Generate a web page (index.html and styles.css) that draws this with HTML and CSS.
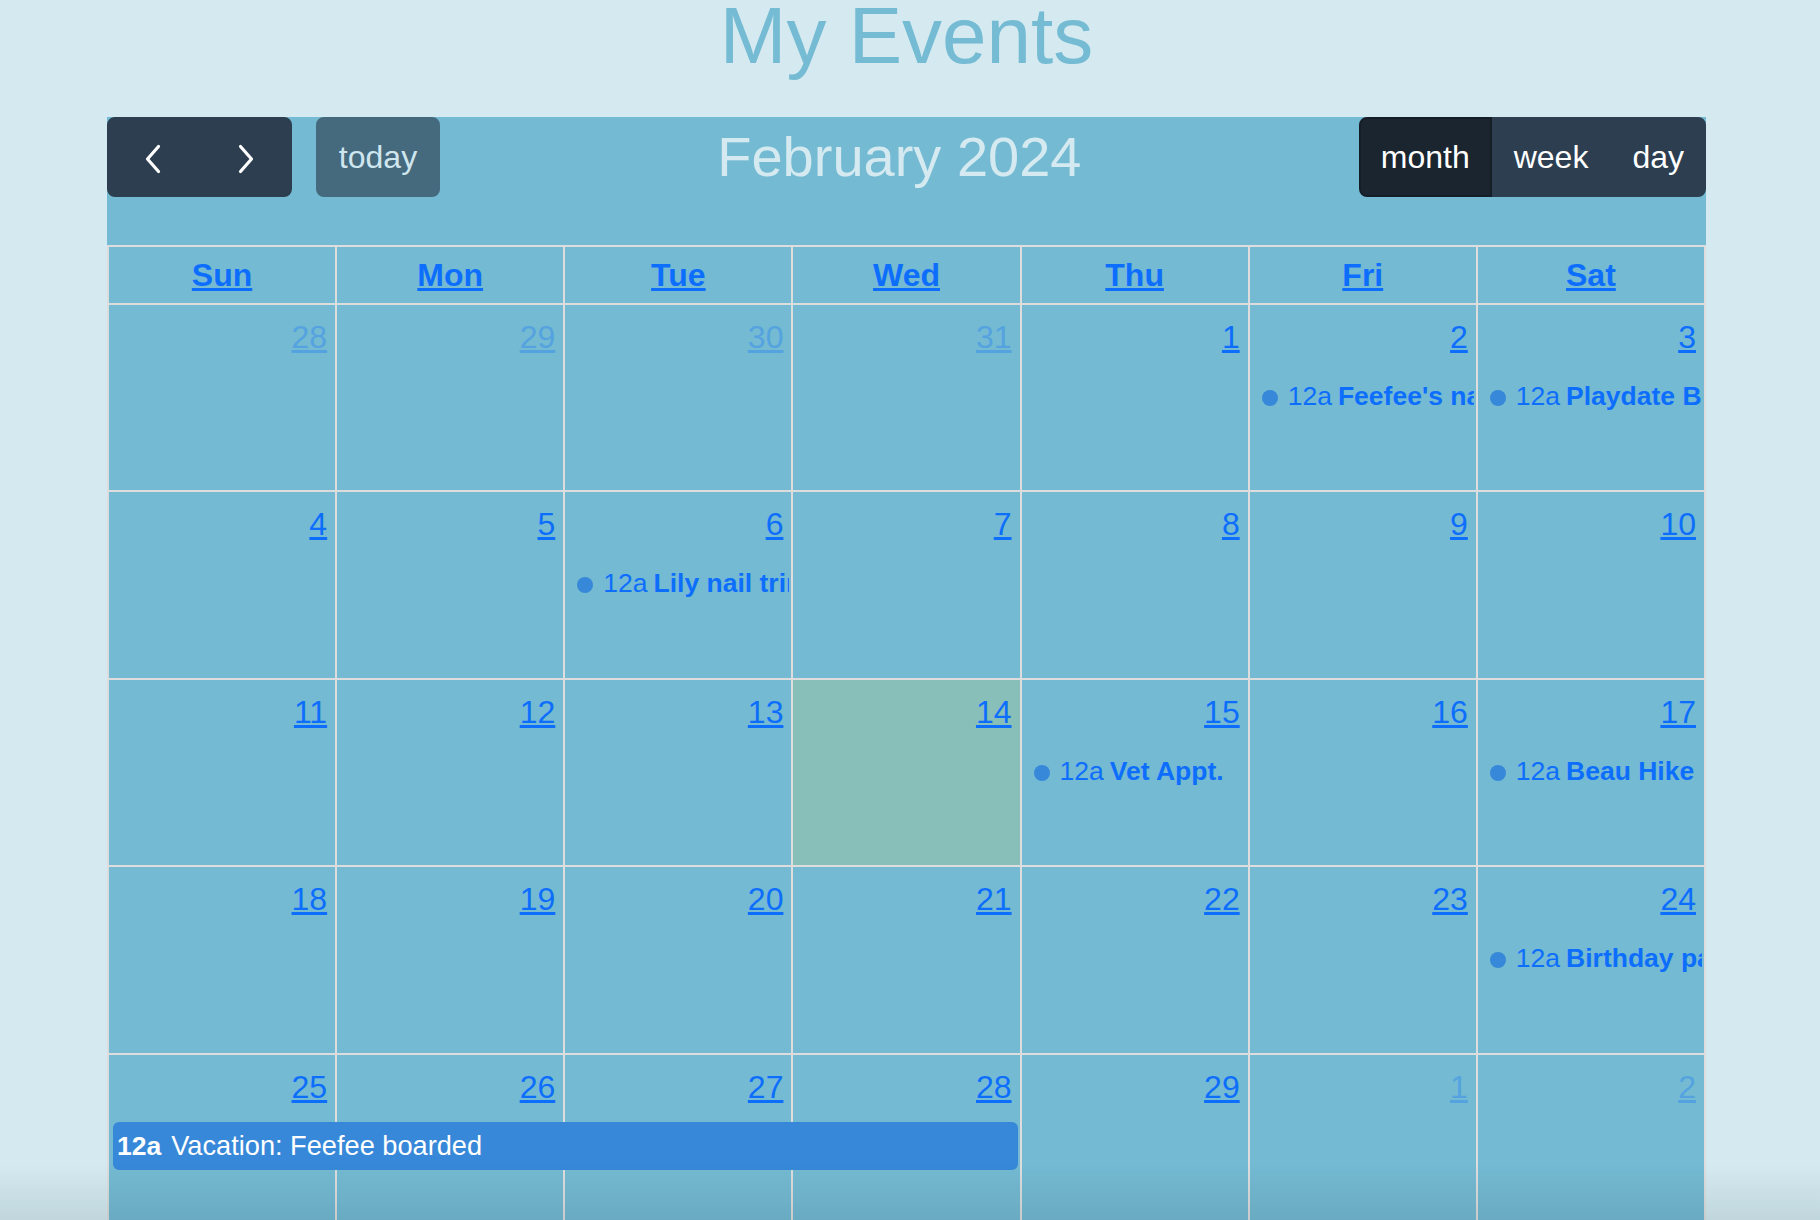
FILE: index.html
```html
<!DOCTYPE html>
<html lang="en">
<head>
<meta charset="utf-8">
<title>My Events</title>
<link rel="stylesheet" href="styles.css">
</head>
<body>
<div class="page">
  <h1 class="page-title">My Events</h1>
  <div class="calendar">
    <div class="toolbar">
      <div class="toolbar-chunk">
        <div class="btn-group">
          <button class="btn btn-icon" aria-label="prev"><svg width="18" height="30" viewBox="0 0 18 30"><path d="M14.5 2.5 L3.5 15 L14.5 27.5" fill="none" stroke="#fff" stroke-width="3.2" stroke-linecap="round" stroke-linejoin="round"/></svg></button>
          <button class="btn btn-icon" aria-label="next"><svg width="18" height="30" viewBox="0 0 18 30"><path d="M3.5 2.5 L14.5 15 L3.5 27.5" fill="none" stroke="#fff" stroke-width="3.2" stroke-linecap="round" stroke-linejoin="round"/></svg></button>
        </div>
        <button class="btn btn-today">today</button>
      </div>
      <h2 class="toolbar-title">February 2024</h2>
      <div class="btn-group">
        <button class="btn active">month</button>
        <button class="btn">week</button>
        <button class="btn">day</button>
      </div>
    </div>

    <div class="grid">
      <div class="head-row">
        <div class="head-cell"><a href="#">Sun</a></div>
        <div class="head-cell"><a href="#">Mon</a></div>
        <div class="head-cell"><a href="#">Tue</a></div>
        <div class="head-cell"><a href="#">Wed</a></div>
        <div class="head-cell"><a href="#">Thu</a></div>
        <div class="head-cell"><a href="#">Fri</a></div>
        <div class="head-cell"><a href="#">Sat</a></div>
      </div>

      <div class="week week-a">
        <div class="day other"><a class="num" href="#">28</a></div>
        <div class="day other"><a class="num" href="#">29</a></div>
        <div class="day other"><a class="num" href="#">30</a></div>
        <div class="day other"><a class="num" href="#">31</a></div>
        <div class="day"><a class="num" href="#">1</a></div>
        <div class="day"><a class="num" href="#">2</a></div>
        <div class="day"><a class="num" href="#">3</a></div>
        <a class="dot-event col-6" href="#"><span class="dot"></span><span class="ev-time">12a</span><span class="ev-title">Feefee's nails</span></a>
        <a class="dot-event col-7" href="#"><span class="dot"></span><span class="ev-time">12a</span><span class="ev-title">Playdate Beau</span></a>
      </div>

      <div class="week week-b">
        <div class="day"><a class="num" href="#">4</a></div>
        <div class="day"><a class="num" href="#">5</a></div>
        <div class="day"><a class="num" href="#">6</a></div>
        <div class="day"><a class="num" href="#">7</a></div>
        <div class="day"><a class="num" href="#">8</a></div>
        <div class="day"><a class="num" href="#">9</a></div>
        <div class="day"><a class="num" href="#">10</a></div>
        <a class="dot-event col-3" href="#"><span class="dot"></span><span class="ev-time">12a</span><span class="ev-title">Lily nail trim</span></a>
      </div>

      <div class="week week-a">
        <div class="day"><a class="num" href="#">11</a></div>
        <div class="day"><a class="num" href="#">12</a></div>
        <div class="day"><a class="num" href="#">13</a></div>
        <div class="day today"><a class="num" href="#">14</a></div>
        <div class="day"><a class="num" href="#">15</a></div>
        <div class="day"><a class="num" href="#">16</a></div>
        <div class="day"><a class="num" href="#">17</a></div>
        <a class="dot-event col-5" href="#"><span class="dot"></span><span class="ev-time">12a</span><span class="ev-title">Vet Appt.</span></a>
        <a class="dot-event col-7" href="#"><span class="dot"></span><span class="ev-time">12a</span><span class="ev-title">Beau Hike</span></a>
      </div>

      <div class="week week-b">
        <div class="day"><a class="num" href="#">18</a></div>
        <div class="day"><a class="num" href="#">19</a></div>
        <div class="day"><a class="num" href="#">20</a></div>
        <div class="day"><a class="num" href="#">21</a></div>
        <div class="day"><a class="num" href="#">22</a></div>
        <div class="day"><a class="num" href="#">23</a></div>
        <div class="day"><a class="num" href="#">24</a></div>
        <a class="dot-event col-7" href="#"><span class="dot"></span><span class="ev-time">12a</span><span class="ev-title">Birthday party</span></a>
      </div>

      <div class="week week-a">
        <div class="day"><a class="num" href="#">25</a></div>
        <div class="day"><a class="num" href="#">26</a></div>
        <div class="day"><a class="num" href="#">27</a></div>
        <div class="day"><a class="num" href="#">28</a></div>
        <div class="day"><a class="num" href="#">29</a></div>
        <div class="day other"><a class="num" href="#">1</a></div>
        <div class="day other"><a class="num" href="#">2</a></div>
        <a class="block-event span-1-4" href="#"><span class="ev-time">12a</span><span class="ev-title-plain">Vacation: Feefee boarded</span></a>
      </div>
    </div>
  </div>
</div>
<div class="screen-shade"></div>
</body>
</html>
```

FILE: styles.css
```css
html, body {
  margin: 0;
  padding: 0;
}

body {
  background: #d4eaf0;
  font-family: "Liberation Sans", Arial, Helvetica, sans-serif;
  color: #212529;
}

.page {
  width: 1813px;
  height: 1220px;
  overflow: hidden;
}

.page-title {
  margin: 0 0 45px;
  font-size: 80px;
  line-height: 72px;
  font-weight: normal;
  text-align: center;
  color: #74bbd3;
}

.calendar {
  width: 1599px;
  margin: 0 auto;
  background: #74bad2;
}

/* toolbar */
.toolbar {
  display: flex;
  justify-content: space-between;
  align-items: center;
  height: 80px;
  margin-bottom: 48px;
}

.toolbar-chunk {
  display: flex;
  align-items: center;
  gap: 24px;
}

.toolbar-title {
  margin: 0;
  font-size: 56px;
  line-height: 64px;
  font-weight: normal;
  color: #d4eaf0;
}

.btn-group {
  display: flex;
}

.btn {
  box-sizing: border-box;
  height: 80px;
  margin: 0;
  padding: 0 20px;
  border: 2px solid #2c3e50;
  border-radius: 8px;
  background: #2c3e50;
  color: #fff;
  font-family: inherit;
  font-size: 32px;
  line-height: 76px;
  display: flex;
  align-items: center;
  justify-content: center;
}

.btn-group .btn {
  border-radius: 0;
}

.btn-group .btn:first-child {
  border-radius: 8px 0 0 8px;
}

.btn-group .btn:last-child {
  border-radius: 0 8px 8px 0;
}

.btn.active {
  background: #1a252f;
  border-color: #151e27;
}

.btn-icon {
  width: 92.5px;
  padding: 4px 0 0;
}

.btn-icon svg {
  display: block;
}

.btn-today {
  width: 124px;
  opacity: 0.65;
}

/* grid */
.grid {
  border-left: 2px solid #ddd;
  border-top: 2px solid #ddd;
}

.head-row {
  display: grid;
  grid-template-columns: repeat(7, minmax(0, 1fr));
}

.head-cell {
  height: 58px;
  box-sizing: border-box;
  border-right: 2px solid #ddd;
  border-bottom: 2px solid #ddd;
  text-align: center;
  font-size: 32px;
  line-height: 56px;
  font-weight: bold;
}

.head-cell a,
.num,
.dot-event {
  color: #0d6efd;
}

.week {
  display: grid;
  grid-template-columns: repeat(7, minmax(0, 1fr));
  grid-template-rows: 67px 48px 1fr;
}

.week-a { height: 187px; }
.week-b { height: 188px; }

.day {
  grid-row: 1 / 4;
  box-sizing: border-box;
  border-right: 2px solid #ddd;
  border-bottom: 2px solid #ddd;
  display: flex;
  justify-content: flex-end;
  align-items: flex-start;
  min-width: 0;
}

.day:nth-child(1) { grid-column: 1; }
.day:nth-child(2) { grid-column: 2; }
.day:nth-child(3) { grid-column: 3; }
.day:nth-child(4) { grid-column: 4; }
.day:nth-child(5) { grid-column: 5; }
.day:nth-child(6) { grid-column: 6; }
.day:nth-child(7) { grid-column: 7; }

.day.today {
  background: rgba(255, 220, 40, 0.15);
}

.num {
  margin: 14px 8px 0 0;
  font-size: 32px;
  line-height: 37px;
}

.day.other .num {
  opacity: 0.3;
}

/* events */
.dot-event {
  grid-row: 2;
  margin: 0 4px;
  min-width: 0;
  display: flex;
  align-items: center;
  overflow: hidden;
  white-space: nowrap;
  font-size: 26.5px;
  line-height: 48px;
  text-decoration: none;
}

.dot {
  flex: none;
  width: 16px;
  height: 16px;
  border-radius: 50%;
  background: #3788d8;
  margin: 4px 10px 0 8px;
}

.ev-time {
  margin-right: 6px;
}

.ev-title {
  font-weight: bold;
}

.block-event {
  grid-row: 2;
  margin: 0 4px;
  min-width: 0;
  box-sizing: border-box;
  display: flex;
  align-items: center;
  overflow: hidden;
  white-space: nowrap;
  padding: 0 2px;
  border: 2px solid #3788d8;
  border-radius: 6px;
  background: #3788d8;
  color: #fff;
  font-size: 26.5px;
  line-height: 44px;
  text-decoration: none;
}

.block-event .ev-time {
  font-weight: bold;
  margin-right: 10px;
}

.ev-title-plain {
  font-size: 27.2px;
}

.col-3 { grid-column: 3; }
.col-5 { grid-column: 5; }
.col-6 { grid-column: 6; }
.col-7 { grid-column: 7; }
.span-1-4 { grid-column: 1 / 5; }

.screen-shade {
  position: fixed;
  left: 0;
  right: 0;
  bottom: 0;
  height: 55px;
  background: linear-gradient(rgba(0, 20, 30, 0), rgba(0, 20, 30, 0.09));
  pointer-events: none;
}
```
